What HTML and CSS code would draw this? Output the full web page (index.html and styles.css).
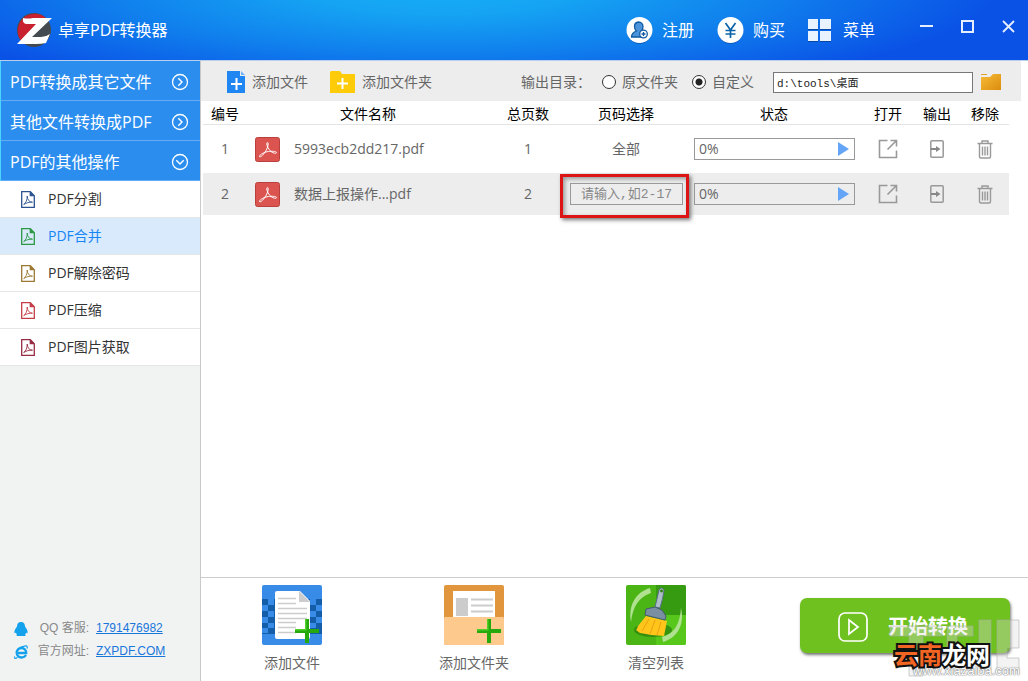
FILE: index.html
```html
<!DOCTYPE html>
<html lang="zh-CN">
<head>
<meta charset="utf-8">
<title>卓享PDF转换器</title>
<link rel="stylesheet" href="styles.css">
</head>
<body>
<svg class="sprite" aria-hidden="true">
  <symbol id="doc" viewBox="0 0 14 17"><path d="M.7.7h8.6l4 4v11.6H.7zM9.3.7v4h4" fill="none" stroke="currentColor" stroke-width="1.300"/><path d="M10 1v3.500h3z" fill="currentColor"/><path d="M2.700 13.500c2-1.200 3.700-4.500 3.500-8.500.3 4 2 6 5.300 6.200-3.300-.2-6 .6-8.800 2.300z" fill="none" stroke="currentColor" stroke-width=".9"/></symbol>
  <symbol id="pdf" viewBox="0 0 25 25"><rect x=".5" y=".5" width="24" height="24" rx="2" fill="#dc5450" stroke="#b9403c"/><path d="M4.500 19.500c0-2 5-4.500 9-5 3-.4 7.500-.3 8 .9.300 1.300-2.800 1.200-5.500-.9-2.500-2-4-5-4.200-7.500-.1-2 1.400-2 1.400 0 0 3.500-3 8.500-5.600 11.200-1.500 1.600-3 2-3.100 1.300z" fill="none" stroke="#fff" stroke-width="1"/></symbol>
  <symbol id="open" viewBox="0 0 20 20"><path d="M9.500 1.500h-8v17h17v-7M12.500 1.500h6v6M18 2l-8.500 8.500" fill="none" stroke="#999" stroke-width="1.600"/></symbol>
  <symbol id="export" viewBox="0 0 14 18"><rect x=".8" y=".8" width="12.400" height="16.400" rx="1" fill="none" stroke="#999" stroke-width="1.500"/><path d="M1 9h6" stroke="#888" stroke-width="2"/><path d="M6 6l4.500 3L6 12z" fill="#888"/></symbol>
  <symbol id="trash" viewBox="0 0 16 19"><path d="M.5 3.500h15M5 3V1h6v2M2.500 4v12.500q0 1.500 1.500 1.500h8q1.500 0 1.500-1.500V4M5.500 6.500v9M8 6.500v9M10.500 6.500v9" fill="none" stroke="#999" stroke-width="1.400"/></symbol>
  <symbol id="right" viewBox="0 0 18 18"><circle cx="9" cy="9" r="7.500" fill="none" stroke="#fff" stroke-width="1.300"/><path d="M7.300 5.300L11 9l-3.700 3.700" fill="none" stroke="#fff" stroke-width="1.400"/></symbol>
  <symbol id="plus" viewBox="0 0 24 24"><path d="M10 0h4v10h10v4H14v10h-4V14H0v-4h10z" fill="#25a90d"/><path d="M10 0h1.500v11.500H0V10h10z" fill="#52d02a"/></symbol>
</svg>

<header class="titlebar">
  <svg class="logo" viewBox="0 0 36 36"><circle cx="18" cy="18" r="17" fill="#444b50"/><path d="M30 6A17 17 0 0 0 6 30z" fill="#c9202f"/><path d="M7 6q5 1 10 0h19L16 25h9q5 0 9-3l-4 9q-5 1-10 1H1l19-20H10q-4-1-3-6z" fill="#fff"/></svg>
  <h1>卓享PDF转换器</h1>
  <nav class="actions">
    <button><svg width="27" height="27" viewBox="0 0 27 27"><circle cx="13.500" cy="14.500" r="12.500" fill="#084b9d" opacity=".6"/><circle cx="13.500" cy="13" r="13" fill="#fff"/><path d="M12.500 5a4.500 4.500 0 0 0-4 4.500c0 2 .7 3.500 1.800 4.500-3 1.200-4.800 3-4.800 6h12a4.500 4.500 0 0 1-2-6c1-1.200 1.500-3 1.500-4.500A4.500 4.500 0 0 0 12.500 5z" fill="#4b93da" stroke="#115ba3" stroke-width="1.300"/><circle cx="17.500" cy="17" r="3.800" fill="#fff" stroke="#115ba3" stroke-width="1.300"/><path d="M15.500 17h4M17.500 15v4" stroke="#115ba3" stroke-width="1.300"/></svg>注册</button>
    <button><svg width="27" height="27" viewBox="0 0 27 27"><circle cx="13.500" cy="14.500" r="12.500" fill="#084b9d" opacity=".6"/><circle cx="13.500" cy="13" r="13" fill="#fff"/><path d="M8.500 6l5 7 5-7M13.500 13v8M8.500 13.500h10M8.500 17h10" fill="none" stroke="#0b64a9" stroke-width="1.700"/></svg>购买</button>
    <button class="menu"><svg width="23" height="23" viewBox="0 0 23 23"><path d="M0 1h10v10H0zM12 1h11v10H12zM0 13h10v10H0zM12 13h11v10H12z" fill="#0747a4"/><path d="M0 0h10v10H0zM12 0h11v10H12zM0 12h10v10H0zM12 12h11v10H12z" fill="#e8f3ff"/></svg>菜单</button>
  </nav>
  <div class="window">
    <button aria-label="最小化"><svg width="13" height="13" viewBox="0 0 13 13"><path d="M0 6h13" stroke="#e6efff" stroke-width="2"/></svg></button>
    <button aria-label="最大化"><svg width="13" height="13" viewBox="0 0 13 13"><path d="M1 1h11v11H1z" fill="none" stroke="#e6efff" stroke-width="2"/></svg></button>
    <button aria-label="关闭"><svg width="13" height="13" viewBox="0 0 13 13"><path d="M1 1l11 11M12 1L1 12" stroke="#e6efff" stroke-width="1.800"/></svg></button>
  </div>
</header>

<div class="body">
  <aside class="sidebar">
    <div class="groups">
      <button>PDF转换成其它文件<svg><use href="#right"/></svg></button>
      <button>其他文件转换成PDF<svg><use href="#right"/></svg></button>
      <button aria-expanded="true">PDF的其他操作<svg class="down"><use href="#right"/></svg></button>
    </div>
    <nav class="tools">
      <a href="#split"><svg class="blue"><use href="#doc"/></svg>PDF分割</a>
      <a href="#merge" class="active"><svg class="green"><use href="#doc"/></svg>PDF合并</a>
      <a href="#unlock"><svg class="gold"><use href="#doc"/></svg>PDF解除密码</a>
      <a href="#compress"><svg class="red"><use href="#doc"/></svg>PDF压缩</a>
      <a href="#images"><svg class="wine"><use href="#doc"/></svg>PDF图片获取</a>
    </nav>
    <div class="contact">
      <p><svg viewBox="0 0 14 14"><path d="M7 0c2.800 0 4 2 4 4.500 1 1.500 3 4 2.600 6.200-.2 1-.9.500-1.500-.3 0 1-.6 1.500-1 2 1 .4.600 1.600-1 1.600H4c-1.600 0-2-1.200-1-1.600-.5-.5-1-1-1-2C1.300 11.200.6 11.700.4 10.700 0 8.500 2 6 3 4.500 3 2 4.200 0 7 0z" fill="#14a2ec"/></svg><span>QQ 客服:</span><a href="#qq">1791476982</a></p>
      <p><svg viewBox="0 0 14 14"><path d="M12 10c-1 1.700-2.600 2.500-4.500 2.500A4.700 4.700 0 0 1 2.700 7.700 4.700 4.700 0 0 1 7.500 3a4.700 4.700 0 0 1 4.700 5H4" fill="none" stroke="#14a2ec" stroke-width="2.300"/><path d="M3.500 12.500C1 14 0 13.500.7 11.500M9 1.700C11.500.3 14 .3 13 3.500M2 7c1.500-3 4-5 7.500-5.700" fill="none" stroke="#14a2ec" stroke-width="1.200"/></svg><span>官方网址:</span><a href="#site">ZXPDF.COM</a></p>
    </div>
  </aside>

  <main>
    <div class="toolbar">
      <button><svg width="18" height="22" viewBox="0 0 18 22"><path d="M0 0h13v5h5v17H0z" fill="#2087f2"/><path d="M14 0l4 4h-4z" fill="#6fb2f7"/><path d="M9.500 7v12M4 13h11" stroke="#fff" stroke-width="2"/></svg>添加文件</button>
      <button class="folder"><svg width="25" height="22" viewBox="0 0 25 22"><path d="M1 0h9l2 3h13v19H0V1z" fill="#fdcb08"/><path d="M12.500 7v11M7 12.500h11" stroke="#fff" stroke-width="2"/></svg>添加文件夹</button>
      <form class="output">
        <span>输出目录：</span>
        <label><input type="radio" name="dir">原文件夹</label>
        <label><input type="radio" name="dir" checked>自定义</label>
        <input class="path" type="text" aria-label="输出目录" value="d:\tools\桌面">
        <button type="button" aria-label="选择文件夹"><svg width="20" height="16" viewBox="0 0 20 16"><defs><linearGradient id="fg" x2="1" y2="1"><stop stop-color="#f7bb3a"/><stop offset="1" stop-color="#dc8c0c"/></linearGradient></defs><path d="M0 3h9l3-3h8v16H0z" fill="url(#fg)"/><path d="M0 0h6v1H0z" fill="#e2a52a"/></svg></button>
      </form>
    </div>

    <table>
      <colgroup><col class="c-no"><col><col class="c-pages"><col class="c-range"><col class="c-state"><col class="c-open"><col class="c-icon"><col class="c-icon"></colgroup>
      <thead><tr><th>编号</th><th>文件名称</th><th>总页数</th><th>页码选择</th><th>状态</th><th>打开</th><th>输出</th><th>移除</th></tr></thead>
      <tbody>
        <tr>
          <td>1</td>
          <td><div class="file"><svg><use href="#pdf"/></svg>5993ecb2dd217.pdf</div></td>
          <td>1</td>
          <td>全部</td>
          <td class="state"><div class="progress"><span>0%</span><button aria-label="开始"><svg width="12" height="14" viewBox="0 0 12 14"><path d="M0 0l11 7-11 7z" fill="#64a5f8"/></svg></button></div></td>
          <td><button aria-label="打开"><svg width="20" height="20"><use href="#open"/></svg></button></td>
          <td><button aria-label="输出"><svg width="14" height="18"><use href="#export"/></svg></button></td>
          <td><button aria-label="移除"><svg width="16" height="19"><use href="#trash"/></svg></button></td>
        </tr>
        <tr>
          <td>2</td>
          <td><div class="file"><svg><use href="#pdf"/></svg>数据上报操作...pdf</div></td>
          <td>2</td>
          <td class="range"><div class="marked"><input type="text" aria-label="页码选择" placeholder="请输入,如2-17"></div></td>
          <td class="state"><div class="progress"><span>0%</span><button aria-label="开始"><svg width="12" height="14" viewBox="0 0 12 14"><path d="M0 0l11 7-11 7z" fill="#64a5f8"/></svg></button></div></td>
          <td><button aria-label="打开"><svg width="20" height="20"><use href="#open"/></svg></button></td>
          <td><button aria-label="输出"><svg width="14" height="18"><use href="#export"/></svg></button></td>
          <td><button aria-label="移除"><svg width="16" height="19"><use href="#trash"/></svg></button></td>
        </tr>
      </tbody>
    </table>

    <footer>
      <button class="big"><svg viewBox="0 0 60 60"><rect width="60" height="60" rx="2" fill="#388be6"/><path d="M0 14h60v35H0z" fill="#145ea9"/><path d="M6 14h6v6H6zM0 20h6v6H0zM6 26h6v6H6zM0 32h6v6H0zM6 38h6v5H6zM0 43h6v5H0zM48 14h6v6h-6zM54 20h6v6h-6zM48 26h6v6h-6zM54 32h6v6h-6zM48 38h6v5h-6z" fill="#388be6"/><path d="M15 6h23l10 10v36q0 2-2 2H15q-2 0-2-2V8q0-2 2-2z" fill="#fff"/><path d="M37 6l11 11H37z" fill="#ccc"/><path d="M16 13.500h18M16 18.500h18M16 23.500h29M16 28.500h29M16 33.500h29M16 37.500h18M16 42.500h18M16 47.500h18" stroke="#ccc" stroke-width="1.500"/><use href="#plus" x="33" y="34" width="24" height="24"/></svg>添加文件</button>
      <button class="big"><svg viewBox="0 0 60 60"><rect width="60" height="60" rx="2" fill="#e1953c"/><path d="M9 6h42v26H9z" fill="#fff"/><path d="M12 13h12v18H12z" fill="#ccc"/><path d="M27 14.500h22M27 20.500h22M27 26.500h22" stroke="#ccc" stroke-width="2"/><path d="M0 34q0-3 3-2h54q3-1 3 2v24q0 2-2 2H2q-2 0-2-2z" fill="#fdc98d"/><use href="#plus" x="33" y="34" width="24" height="24"/></svg>添加文件夹</button>
      <button class="big"><svg viewBox="0 0 60 60"><rect width="60" height="60" rx="2" fill="#4cb516"/><path d="M30 0h28q2 0 2 2v28H30z" fill="#369b10"/><path d="M30 30h30v28q0 2-2 2H30z" fill="#58c71c"/><ellipse cx="27" cy="45" rx="19" ry="7" fill="#287f0b" opacity=".7"/><path d="M5 37C2 20 10 7 24 3l1 5C13 12 7 21 5 37zM55 23c4 17-4 30-18 34l-1-5c12-3 18-13 19-29z" fill="#afe190"/><path d="M33 5q2-4 5 0-1 9-4 18l-5-1z" fill="#aebdca" stroke="#587082"/><circle cx="35.500" cy="6" r="1.400" fill="#287f0b"/><path d="M20 31L12 41q-1 3-2 4l4 3 6 1 5 1 13 1 3-15z" fill="#ffc51b"/><path d="M23 34l-7 12M29 35l-5 14M35 37l-4 13" stroke="#eca012" stroke-width="1"/><path d="M20 24l9-2 7 3 4 6-1 4-20-5z" fill="#7b8fa3" stroke="#455b6b"/></svg>清空列表</button>
      <div class="launch">
        <button class="start"><svg width="30" height="30" viewBox="0 0 30 30"><rect x="1" y="1" width="28" height="28" rx="6" fill="none" stroke="#fff" stroke-width="1.700"/><path d="M11 8l9 7-9 7z" fill="none" stroke="#fff" stroke-width="1.700"/></svg>开始转换</button>
        <div class="mark"><svg class="mark-art" viewBox="0 0 132 58"><path d="M1 7h52v10H34v40H20V17H1z M58 7h26v10H68v24h16v10H58z M90 1h12v50H90z M108 1h22v28h-12v10h12v12h-22z" fill="#ddd" fill-opacity=".35" stroke="#aaa" stroke-opacity=".55"/></svg><span class="mark-url">www.xiazaiba.com</span><strong><em>云南</em>龙网</strong></div>
      </div>
    </footer>
  </main>
</div>
</body>
</html>
```
FILE: styles.css
```css
* { box-sizing: border-box; }

body {
  margin: 0;
  min-height: 100vh;
  display: flex;
  flex-direction: column;
  font: 14px/20px "Open Sans", "Noto Sans CJK SC", sans-serif;
  color: #666;
  background: #fff;
}

button {
  padding: 0;
  border: 0;
  background: none;
  font: inherit;
  color: inherit;
}

svg { display: block; flex: none; }
.sprite { position: absolute; width: 0; height: 0; }

/* Title bar */
.titlebar {
  display: flex;
  align-items: center;
  height: 61px;
  padding: 0 13px 0 16px;
  border-bottom: 1px solid #b8cff0;
  color: #fff;
  background: radial-gradient(ellipse 54% 180% at 43% -20%, #16aef6 0%, #15a3f3 25%, #1080ed 60%, #0a52e6 100%);
}

.logo { width: 36px; height: 36px; }

h1 {
  margin: 0 0 0 6px;
  font-size: 16px;
  font-weight: 400;
}

.actions {
  display: flex;
  gap: 23px;
  margin-left: auto;
}

.actions button {
  display: flex;
  align-items: center;
  gap: 9px;
  font-size: 16px;
}

.actions .menu { gap: 12px; }

.window {
  display: flex;
  gap: 28px;
  margin: 0 0 8px 45px;
}

/* Page body */
.body { flex: 1; display: flex; }

.sidebar {
  flex: none;
  width: 201px;
  display: flex;
  flex-direction: column;
  border-right: 1px solid #c8c8c8;
  background: #f1f3f3;
}

.groups {
  border-left: 1px solid #4ad4ff;
  background: #2b8eef;
  color: #fff;
}

.groups button {
  display: flex;
  align-items: center;
  justify-content: space-between;
  width: 100%;
  height: 40px;
  padding: 2px 11px 0 9px;
  border-bottom: 1px solid #62adf4;
  font-size: 16px;
}

.groups svg { width: 18px; height: 18px; }
.groups .down { transform: rotate(90deg); }

.tools a {
  display: flex;
  align-items: center;
  gap: 13px;
  height: 37px;
  padding-left: 21px;
  border-bottom: 1px solid #e6e6e6;
  background: #fff;
  color: #333;
  text-decoration: none;
}

.tools a.active { background: #d9eafc; color: #1685f5; }
.tools svg { width: 14px; height: 17px; }
.blue { color: #2c5391; }
.green { color: #2c9844; }
.gold { color: #9c7833; }
.red { color: #c53e46; }
.wine { color: #972c43; }

.contact {
  margin-top: auto;
  padding: 0 0 18px 14px;
  font: 12px/23px "Liberation Sans", "Noto Sans CJK SC", sans-serif;
  color: #888;
}

.contact p { display: flex; align-items: center; margin: 0; }
.contact svg { width: 14px; height: 14px; }
.contact span { width: 61px; text-align: right; }
.contact a { margin-left: 7px; color: #1976db; }

main {
  flex: 1;
  min-width: 0;
  display: flex;
  flex-direction: column;
}

/* Toolbar */
.toolbar {
  display: flex;
  align-items: center;
  gap: 22px;
  height: 40px;
  margin-right: 7px;
  padding: 2px 20px 0 26px;
  background: #ededed;
}

.toolbar > button { display: flex; align-items: center; gap: 7px; }
.output { display: flex; align-items: center; margin-left: auto; }
.output label { display: flex; align-items: center; gap: 6px; margin-right: 14px; }
.output span { margin-right: 11px; }

input[type="radio"] {
  appearance: none;
  width: 14px;
  height: 14px;
  margin: 0;
  border: 1px solid #333;
  border-radius: 50%;
  background: #fff;
}

input[type="radio"]:checked { background: radial-gradient(circle, #222 0 3px, #fff 4px); }

.path {
  width: 200px;
  height: 21px;
  margin: 0 8px 0 5px;
  padding: 0 3px;
  border: 1px solid #777;
  background: #fff;
  color: #222;
  font: 11px "Liberation Mono", "Noto Sans CJK SC", monospace;
}

/* File list */
table {
  width: calc(100% - 21px);
  margin: 0 19px 0 2px;
  table-layout: fixed;
  border-collapse: separate;
  border-spacing: 0;
  text-align: center;
}

.c-no { width: 44px; }
.c-pages { width: 78px; }
.c-range { width: 118px; }
.c-state { width: 178px; }
.c-open { width: 50px; }
.c-icon { width: 48px; }

th {
  height: 24px;
  padding: 2px 0 0;
  border-bottom: 1px solid #e4e4e4;
  font-weight: 400;
  color: #000;
}

td { height: 42px; padding: 0; }
tbody tr:first-child td { height: 48px; }
tbody tr:nth-child(even) { background: #ededed; }
td > button { display: block; margin: 0 auto; }

.file { display: flex; align-items: center; gap: 14px; padding-left: 8px; }
.file svg { width: 25px; height: 25px; }

td.state { padding: 0 8px 0 9px; }

.progress {
  display: flex;
  align-items: center;
  justify-content: space-between;
  height: 22px;
  padding: 0 4px;
  border: 1px solid #999;
}

td.range { padding: 0 2px 0 3px; }
.marked { position: relative; }

.marked input {
  display: block;
  width: 100%;
  height: 22px;
  padding: 0;
  border: 1px solid #999;
  background: transparent;
  text-align: center;
  font: 13px "Liberation Mono", "Noto Sans CJK SC", monospace;
}

.marked input::placeholder { color: #888; }

.marked::after {
  content: "";
  position: absolute;
  inset: -9px -6px -13px -10px;
  border: 3px solid #dc1414;
  box-shadow: 2px 2px 4px #777, inset 2px 2px 4px #999;
  pointer-events: none;
}

/* Bottom actions */
footer {
  display: flex;
  align-items: flex-start;
  height: 104px;
  margin-top: auto;
  padding: 7px 18px 0 0;
  border-top: 1px solid #ccc;
}

.big {
  width: 182px;
  display: flex;
  flex-direction: column;
  align-items: center;
  gap: 8px;
}

.big svg { width: 60px; height: 60px; }

.launch { position: relative; margin: 13px 0 0 auto; }

.start {
  display: flex;
  align-items: center;
  gap: 20px;
  width: 210px;
  height: 55px;
  padding: 2px 0 0 38px;
  border-radius: 7px;
  background: #6fc11f;
  box-shadow: 1px 2px 3px #777;
  color: #fff;
  font-size: 20px;
  font-weight: 700;
}

.mark {
  position: absolute;
  top: 14px;
  left: 94px;
  width: 130px;
  height: 66px;
  pointer-events: none;
}

.mark-art {
  position: absolute;
  top: 7px;
  left: -5px;
  width: 132px;
  height: 58px;
}

.mark-url {
  position: absolute;
  top: 51px;
  left: 19px;
  font: 13px/16px "Liberation Sans", sans-serif;
  color: #fff;
  text-shadow: 0 0 1px #888, 0 0 1px #888, 0 0 2px #999;
}

.mark strong {
  position: absolute;
  top: 28px;
  left: 0;
  font: bold 24px/28px "Noto Sans CJK SC", sans-serif;
  color: #fff;
  -webkit-text-stroke: 4px #111;
  paint-order: stroke fill;
}

.mark em { font-style: normal; color: #f26522; }
```
